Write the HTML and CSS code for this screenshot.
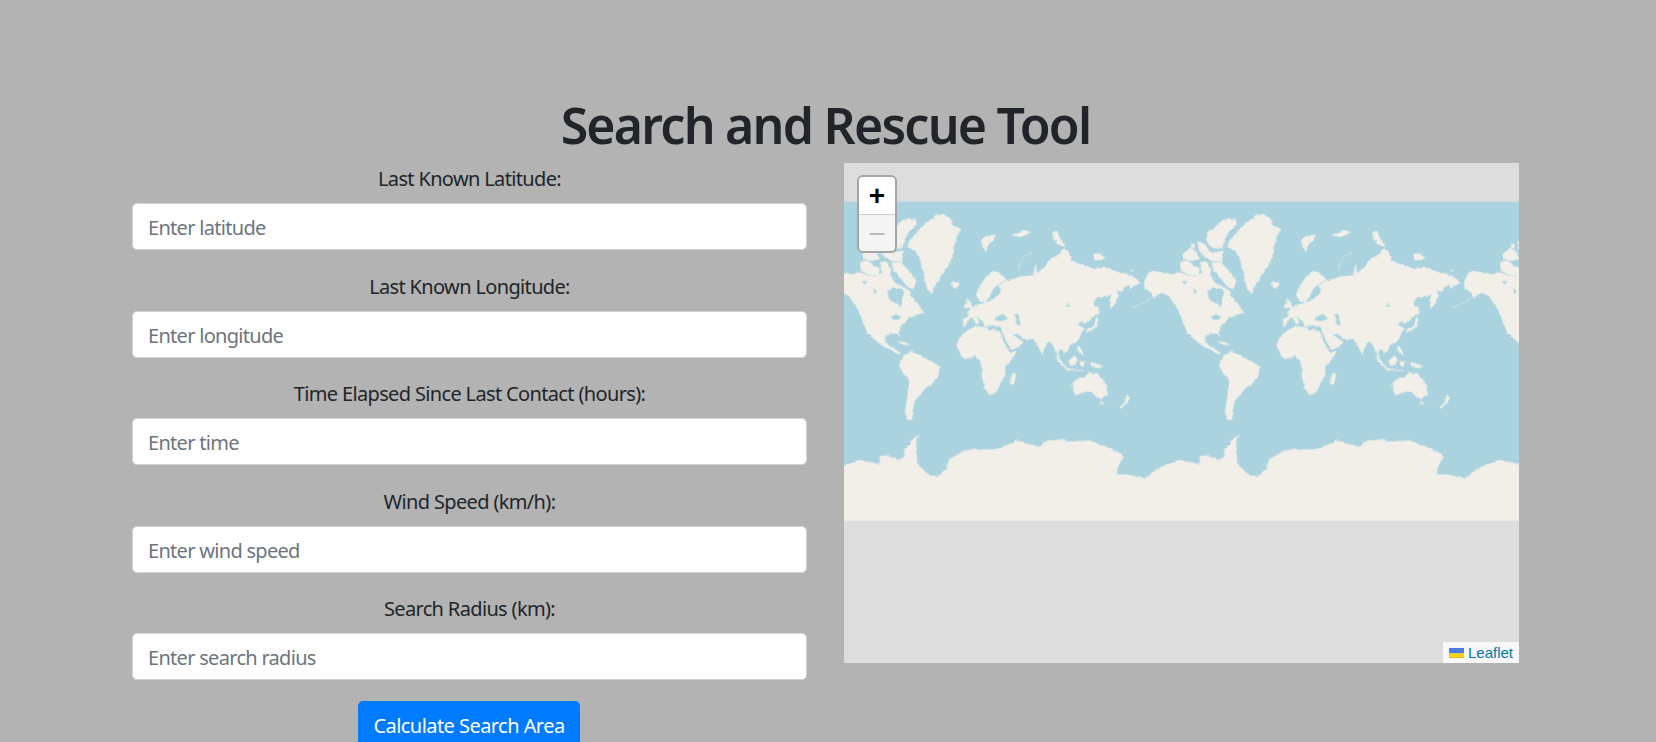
FILE: index.html
```html
<!DOCTYPE html>
<html lang="en">
<head>
<meta charset="utf-8">
<title>Search and Rescue Tool</title>
<link rel="stylesheet" href="styles.css">
</head>
<body>
<div class="container">
  <h1 class="title">Search and Rescue Tool</h1>
  <div class="row">
    <form class="form">
      <div class="group">
        <label class="label" for="lat">Last Known Latitude:</label>
        <input class="input" id="lat" type="text" placeholder="Enter latitude">
      </div>
      <div class="group">
        <label class="label" for="lng">Last Known Longitude:</label>
        <input class="input" id="lng" type="text" placeholder="Enter longitude">
      </div>
      <div class="group">
        <label class="label" for="time">Time Elapsed Since Last Contact (hours):</label>
        <input class="input" id="time" type="text" placeholder="Enter time">
      </div>
      <div class="group">
        <label class="label" for="wind">Wind Speed (km/h):</label>
        <input class="input" id="wind" type="text" placeholder="Enter wind speed">
      </div>
      <div class="group">
        <label class="label" for="radius">Search Radius (km):</label>
        <input class="input" id="radius" type="text" placeholder="Enter search radius">
      </div>
      <button class="btn" type="button">Calculate Search Area</button>
    </form>
    <div class="map">
      <svg class="tiles" viewBox="0 0 675 500" xmlns="http://www.w3.org/2000/svg" aria-hidden="true">
        <defs>
          <filter id="rough" x="-5%" y="-5%" width="110%" height="110%">
            <feTurbulence type="fractalNoise" baseFrequency="0.09" numOctaves="2" seed="4" result="n"/>
            <feDisplacementMap in="SourceGraphic" in2="n" scale="9" xChannelSelector="R" yChannelSelector="G"/>
            <feGaussianBlur stdDeviation="1.2"/>
          </filter>
          <g id="world">
            <g class="land">
              <!-- north america, greenland, arctic -->
              <path d="M352,62 375,42 400,37 420,50 430,72 452,82 440,105 432,130 430,160 415,190 392,222 375,255 365,277 352,262 345,235 340,205 330,175 318,150 292,135 300,115 320,95 335,75Z"/>
              <path d="M252,80 270,62 295,50 318,55 320,70 300,85 285,110 275,140 245,138 228,115 235,90Z"/>
              <path d="M245,183 272,181 292,203 307,223 320,240 307,264 290,252 270,227 252,207Z"/>
              <path d="M150,180 175,176 192,193 208,198 206,224 175,218 153,207Z"/>
              <path d="M158,157 180,138 197,148 208,172 185,177 163,172Z"/>
              <path d="M203,118 226,128 238,148 227,168 208,147Z"/>
              <path d="M226,150 250,153 280,146 276,178 245,178 230,167Z"/>
              <path d="M210,180 230,180 243,200 238,228 216,207Z"/>
              <path d="M183,125 192,128 193,140 184,137Z"/>
              <path d="M42,240 55,215 70,207 95,213 125,218 150,212 170,220 200,226 215,213 235,216 250,230 255,245 270,250 295,265 310,290 325,310 342,333 325,335 310,345 300,343 285,360 270,375 265,395 270,405 258,395 240,395 225,405 225,420 240,435 260,445 272,455 268,458 250,450 232,438 215,430 195,415 175,395 160,365 150,335 135,310 120,285 95,272 80,282 70,287 68,278 60,270 45,262Z"/>
              <path class="thin" d="M70,286 40,303 5,318"/>
              <path d="M0,222 15,230 30,245 15,250 0,262Z"/>
              <path d="M0,203 10,205 6,209Z"/>
              <path d="M260,417 285,422 300,430 280,428Z"/>
              <path d="M422,245 435,240 447,243 445,255 432,260Z"/>
              <path d="M470,290 480,300 488,322 475,318 460,318 468,305Z"/>
              <path d="M268,490 278,464 300,450 330,460 355,475 390,494 385,519 372,542 345,559 330,579 312,599 308,629 307,652 298,657 285,634 290,599 296,559 298,534 280,516Z"/>
              <path class="sea" d="M233,268 250,258 275,262 282,270 275,295 272,318 262,305 245,300 235,285Z"/>
              <path class="sea" d="M243,342 258,338 272,345 262,355 247,352Z"/>
              <path class="sea" d="M155,240 170,238 166,248Z"/>
              <path class="sea" d="M190,262 200,270 192,275Z"/>
              <!-- eurasia, africa, islands -->
              <g transform="translate(480 0)">
                <path d="M112,236 130,232 150,225 175,222 190,222 192,200 198,190 200,215 212,206 225,195 235,178 255,165 270,155 280,140 295,150 305,178 330,186 350,195 375,202 400,195 425,205 460,215 490,225 510,243 492,250 470,250 455,268 440,268 445,280 436,305 422,320 418,300 426,278 410,285 385,285 372,300 370,312 385,318 382,335 362,352 345,365 332,360 322,368 338,378 345,382 335,388 330,405 320,420 300,430 292,450 282,452 270,440 265,455 275,490 262,465 250,430 235,420 222,440 218,460 205,435 190,410 172,415 155,405 140,395 128,395 145,412 160,420 150,432 125,445 112,425 98,392 92,375 65,370 45,375 40,362 30,352 18,342 28,362 20,368 5,345 -5,355 -15,375 -22,372 -20,352 -5,345 -8,332 5,318 18,310 35,306 60,300 78,285 92,272 92,262 85,252 100,245Z"/>
                <path d="M18,278 30,250 50,225 70,208 85,212 100,225 112,236 100,240 82,250 70,262 55,290 45,300 30,300Z"/>
                <path d="M-40,432 -30,405 -5,385 15,375 40,376 60,385 80,385 92,392 100,420 117,450 140,450 125,474 105,494 105,519 85,559 75,574 55,577 45,559 35,524 38,504 28,474 15,462 -10,472 -25,465Z"/>
                <path d="M33,113 50,102 75,100 70,118 55,125 48,150 38,135Z"/>
                <path d="M128,97 145,95 160,85 178,90 170,100 150,105 130,103Z"/>
                <path class="thin" d="M186,152 165,162 152,180 145,207"/>
                <path d="M250,90 262,88 270,110 285,130 272,133 258,120 248,105Z"/>
                <path d="M370,160 385,155 405,168 395,175 375,175Z"/>
                <path d="M380,345 385,355 378,380 360,388 348,392 350,385 370,375 375,360Z"/>
                <path d="M382,312 388,320 387,340 382,335Z"/>
                <path d="M325,432 335,445 340,460 330,455 322,440Z"/>
                <path d="M258,465 275,480 290,498 282,498 265,480Z"/>
                <path d="M285,498 310,503 340,506 315,507 290,503Z"/>
                <path d="M297,475 315,462 325,475 312,490 300,490Z"/>
                <path d="M330,480 345,478 340,495 330,490Z"/>
                <path d="M360,482 380,486 400,494 385,499 365,494Z"/>
                <path class="sea" d="M78,345 100,338 112,350 95,358 75,355Z"/>
                <path class="sea" d="M130,340 145,336 150,372 136,366 140,352Z"/>
                <path class="sea" d="M62,290 68,268 80,258 88,268 78,272 72,290Z"/>
                <path class="sea" d="M290,312 298,303 295,316Z"/>
              </g>
              <!-- southern islands and oceania -->
              <g transform="translate(480 474)">
                <path d="M130,40 138,42 132,72 122,75 120,60Z"/>
                <path d="M307,70 325,55 345,50 355,38 370,45 378,38 395,55 412,80 410,105 395,118 380,112 365,95 345,97 315,105 310,90Z"/>
                <path d="M390,125 400,126 398,134 392,133Z"/>
                <path d="M470,105 480,115 470,130 452,147 450,140 465,125Z"/>
              </g>
              <!-- antarctica -->
              <path d="M-10,820 20,826 45,831 65,814 95,794 125,784 148,774 165,779 190,784 210,789 210,764 225,761 245,767 265,774 285,764 283,744 300,729 305,714 330,699 318,714 320,764 322,789 345,809 360,822 385,824 410,799 418,774 450,754 480,742 510,744 540,744 550,744 575,736 595,729 625,716 650,726 675,732 687,739 705,719 740,712 770,719 800,719 840,717 880,732 910,744 938,759 935,774 922,799 920,819 950,819 975,824 975,990 -10,990Z"/>
            </g>
          </g>
        </defs>
        <rect class="sea-bg" x="0" y="38.7" width="675" height="319"/>
        <use href="#world" class="copy" transform="translate(-34 38.7) scale(.33333)"/>
        <use href="#world" class="copy" transform="translate(286 38.7) scale(.33333)"/>
        <use href="#world" class="copy" transform="translate(606 38.7) scale(.33333)"/>
        <rect class="blank" x="0" y="357.7" width="675" height="143"/>
      </svg>
      <div class="zoom">
        <button class="zoom-btn" type="button">+</button>
        <button class="zoom-btn zoom-off" type="button">−</button>
      </div>
      <div class="attrib">
        <svg class="flag" viewBox="0 0 15 10" xmlns="http://www.w3.org/2000/svg" aria-hidden="true">
          <rect class="flag-b" width="15" height="5.5"/>
          <rect class="flag-y" y="5.5" width="15" height="3.5"/>
          <rect class="flag-d" y="9" width="15" height="1"/>
        </svg>
        <a class="attrib-link" href="#">Leaflet</a>
      </div>
    </div>
  </div>
</div>
</body>
</html>
```

FILE: styles.css
```css
html {
  overflow: hidden;
}

body {
  margin: 0;
  padding: 93px 5px 0 0;
  background: #b3b3b3;
  color: #212529;
  font-family: "Noto Sans", "Open Sans", sans-serif;
  font-size: 20px;
  line-height: 30px;
}

.container {
  width: 1425px;
  margin: 0 auto;
}

.title {
  margin: 0 0 8px;
  padding-top: 2px;
  font-size: 50px;
  font-weight: 600;
  line-height: 60px;
  text-align: center;
  letter-spacing: -1.75px;
}

.row {
  display: grid;
  grid-template-columns: 675px 675px;
  column-gap: 37px;
  padding: 0 19px;
  align-items: start;
}

.form {
  display: flex;
  flex-direction: column;
  align-items: center;
}

.group {
  width: 100%;
  margin-bottom: 20px;
  text-align: center;
}

.label {
  display: block;
  padding-top: 1px;
  margin-bottom: 9px;
  letter-spacing: -.65px;
}

.input {
  display: block;
  box-sizing: border-box;
  width: 100%;
  height: 47px;
  margin-bottom: .5px;
  padding: 9px 15px 7px;
  border: 1px solid #ced4da;
  border-radius: 5px;
  background: #fff;
  color: #495057;
  font: inherit;
  letter-spacing: -.7px;
}

.input::placeholder {
  color: #6c757d;
  opacity: 1;
}

.btn {
  box-sizing: border-box;
  width: 222px;
  height: 48px;
  margin-right: 1px;
  padding: 2px 0 0;
  border: 0;
  border-radius: 5px;
  background: #007bff;
  color: #fff;
  font: inherit;
  letter-spacing: -.55px;
}

.map {
  position: relative;
  height: 500px;
  overflow: hidden;
  background: #ddd;
}

.tiles {
  display: block;
  width: 675px;
  height: 500px;
}

.sea-bg,
.sea {
  fill: #aad3df;
}

.land {
  fill: #f2efe9;
  stroke: #f2efe9;
  stroke-width: 1;
  stroke-linejoin: round;
}

.land .sea {
  stroke: #aad3df;
}

.land .thin {
  fill: none;
  stroke-width: 2;
}

.copy {
  filter: url(#rough);
}

.blank {
  fill: #ddd;
}

.zoom {
  position: absolute;
  top: 12px;
  left: 13px;
  display: flex;
  flex-direction: column;
  width: 40px;
  box-sizing: border-box;
  border: 2px solid #a3a5a6;
  border-radius: 6px;
  overflow: hidden;
}

.zoom-btn {
  display: block;
  width: 36px;
  height: 37px;
  padding: 0;
  border: 0;
  background: #fff;
  color: #000;
  font-family: "Liberation Sans", sans-serif;
  font-size: 28px;
  font-weight: 700;
  line-height: 37px;
  text-align: center;
}

.zoom-off {
  border-top: 1px solid #ccc;
  background: #f4f4f4;
  color: #bbb;
  font-size: 30px;
  font-weight: 400;
}

.attrib {
  position: absolute;
  right: 0;
  bottom: 0;
  display: flex;
  align-items: center;
  height: 21px;
  padding: 0 6px;
  background: rgba(255, 255, 255, .8);
  font-family: "Liberation Sans", Arial, sans-serif;
  font-size: 15px;
  line-height: 21px;
}

.flag {
  width: 15px;
  height: 10px;
  margin-right: 4px;
}

.flag-b {
  fill: #4c7be1;
}

.flag-y {
  fill: #ffd500;
}

.flag-d {
  fill: #e0bc00;
}

.attrib-link {
  color: #0078a8;
  text-decoration: none;
}
```
